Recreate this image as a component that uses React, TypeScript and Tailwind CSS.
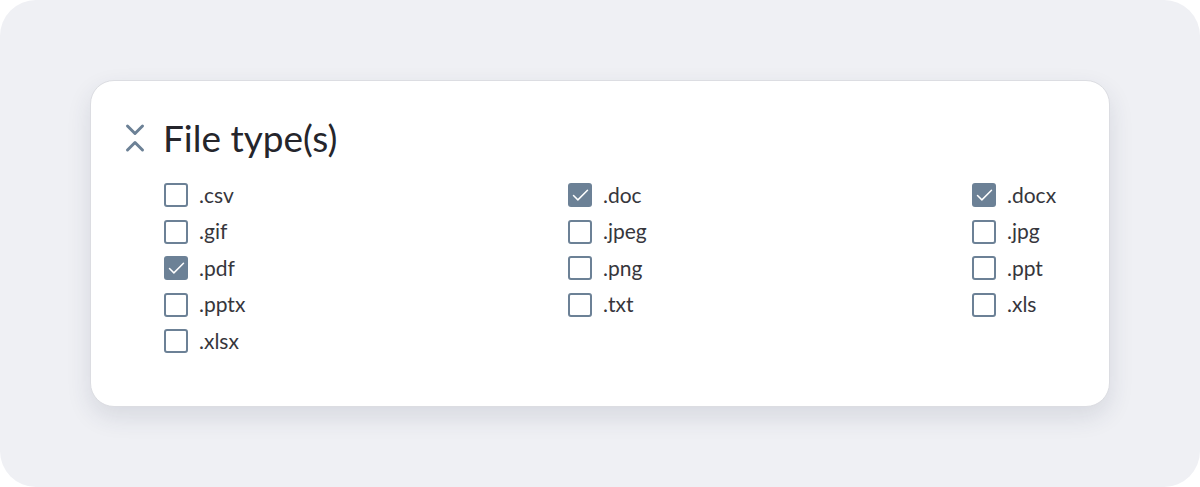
import React from "react";
import { ChevronsDownUp, Check } from "lucide-react";

const columns: { label: string; checked?: boolean }[][] = [
  [
    { label: ".csv" },
    { label: ".gif" },
    { label: ".pdf", checked: true },
    { label: ".pptx" },
    { label: ".xlsx" },
  ],
  [
    { label: ".doc", checked: true },
    { label: ".jpeg" },
    { label: ".png" },
    { label: ".txt" },
  ],
  [
    { label: ".docx", checked: true },
    { label: ".jpg" },
    { label: ".ppt" },
    { label: ".xls" },
  ],
];

const Box = ({ label, checked }: { label: string; checked?: boolean }) => (
  <label className="flex items-center gap-[11px] h-[36.5px] cursor-pointer">
    {checked ? (
      <span className="w-[24px] h-[24px] rounded-[3px] bg-[#6c8196] flex items-center justify-center">
        <Check size={21} strokeWidth={1.7} className="text-white" />
      </span>
    ) : (
      <span className="w-[24px] h-[24px] rounded-[3px] border-2 border-[#6c8196] bg-white" />
    )}
    <span className="text-[21px] text-[#36363c] leading-none pb-[2px]">{label}</span>
  </label>
);

export default function App() {
  return (
    <div
      className="w-[1200px] h-[487px] bg-white"
      style={{ fontFamily: "Lato, 'Noto Sans', sans-serif" }}
    >
      <div className="w-full h-full rounded-[36px] bg-[#eff0f4] pt-[80px] px-[90px]">
        <div className="bg-white rounded-[24px] border border-[#dcdde2] shadow-[0_10px_24px_rgba(40,50,80,0.12)] h-[327px] pt-[38px] pl-[26px]">
          <div className="flex items-center gap-[10px]">
            <ChevronsDownUp size={36} strokeWidth={2} className="text-[#6c8196]" />
            <h2 className="text-[37px] text-[#25252b] leading-none">File type(s)</h2>
          </div>
          <div className="grid grid-cols-[404px_404px_auto] pl-[47px] mt-[21px]">
            {columns.map((col, i) => (
              <div key={i} className="flex flex-col">
                {col.map((item) => (
                  <Box key={item.label} {...item} />
                ))}
              </div>
            ))}
          </div>
        </div>
      </div>
    </div>
  );
}
